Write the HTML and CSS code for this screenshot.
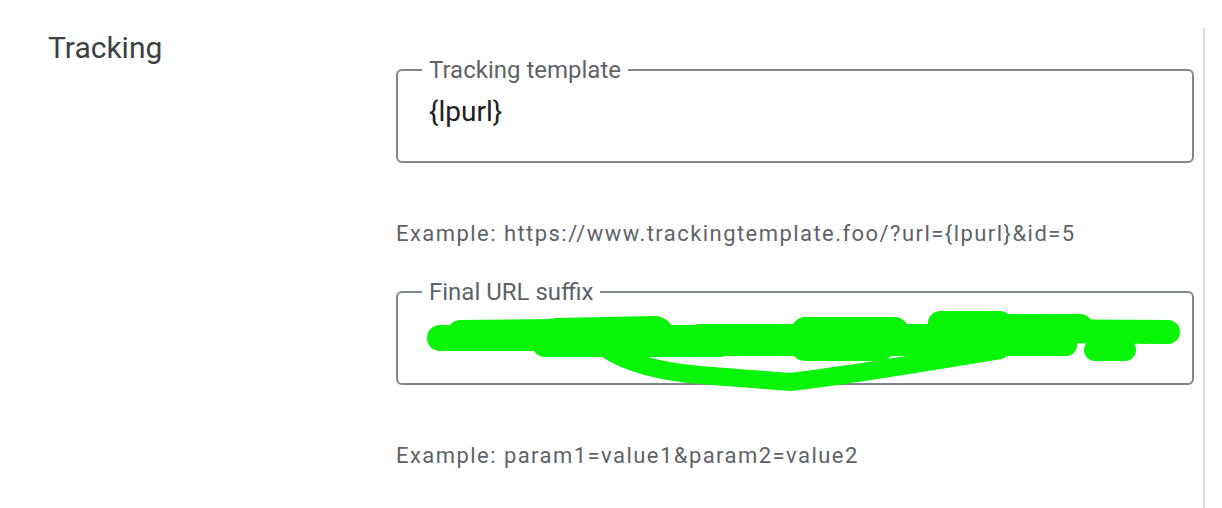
FILE: index.html
```html
<!DOCTYPE html>
<html lang="en">
<head>
<meta charset="utf-8">
<title>Tracking</title>
<link rel="stylesheet" href="styles.css">
</head>
<body>
<div class="page">
  <div class="side">
    <h2 class="title">Tracking</h2>
  </div>
  <div class="main">
    <div class="field">
      <fieldset class="box">
        <legend class="label">Tracking template</legend>
        <div class="row"><span class="value">{lpurl}</span></div>
      </fieldset>
    </div>
    <p class="hint hint-first">Example: https://www.trackingtemplate.foo/?url={lpurl}&amp;id=5</p>
    <div class="field field-second">
      <fieldset class="box">
        <legend class="label">Final URL suffix</legend>
        <div class="row">
          <span class="value"></span>
          <svg class="clear-icon" width="24" height="24" viewBox="0 0 24 24"><circle cx="12" cy="12" r="9" fill="none" stroke="#80868b" stroke-width="2"/></svg>
        </div>
      </fieldset>
      <svg class="redact" width="798" height="120" viewBox="0 0 798 120">
        <g fill="none" stroke="#08f508" stroke-linecap="round" stroke-linejoin="round">
          <path d="M44 58 L304 58" stroke-width="26"/>
          <path d="M64 52 L264 50" stroke-width="24"/>
          <path d="M149 64 L324 64" stroke-width="26"/>
          <path d="M160 50 L260 48" stroke-width="24"/>
          <path d="M304 60 L604 60" stroke-width="32"/>
          <path d="M409 66 L484 66" stroke-width="30"/>
          <path d="M409 50 L499 50" stroke-width="26"/>
          <path d="M544 43 L604 43" stroke-width="24"/>
          <path d="M604 47 L684 47" stroke-width="26"/>
          <path d="M590 65 L670 65" stroke-width="22"/>
          <path d="M604 51 L772 52" stroke-width="24"/>
          <path d="M699 70 L729 70" stroke-width="22"/>
          <path d="M212 70 Q244 90 304 95 L394 102 Q454 95 604 70" stroke-width="18"/>
        </g>
      </svg>
    </div>
    <p class="hint hint-second">Example: param1=value1&amp;param2=value2</p>
  </div>
  <div class="divider"></div>
</div>
</body>
</html>
```

FILE: styles.css
```css
html, body {
  margin: 0;
  padding: 0;
  background: #ffffff;
}

.page {
  display: flex;
  min-height: 508px;
  font-family: Roboto, "Liberation Sans", sans-serif;
}

.side {
  width: 396px;
  box-sizing: border-box;
  padding-left: 48px;
  padding-top: 30px;
  flex-shrink: 0;
}

.title {
  margin: 0;
  font-size: 30px;
  line-height: 36px;
  font-weight: 400;
  color: #3c4043;
}

.main {
  width: 798px;
  flex-shrink: 0;
  padding-top: 58px;
}

.field {
  position: relative;
}

.field-second {
  margin-top: 33px;
}

.box {
  margin: 0;
  min-width: 0;
  border: 2px solid #80868b;
  border-radius: 6px;
  padding: 16px 36px 35px 24px;
}

.label {
  padding: 0 7px;
  font-size: 24px;
  line-height: 24px;
  color: #5f6368;
}

.row {
  display: flex;
  justify-content: space-between;
  align-items: center;
  height: 28px;
}

.value {
  padding-left: 7px;
  font-size: 28px;
  line-height: 28px;
  color: #202124;
}

.redact {
  position: absolute;
  left: 0;
  top: 0;
  pointer-events: none;
}

.hint {
  margin: 0;
  font-size: 22px;
  line-height: 26px;
  letter-spacing: 1.45px;
  color: #5f6368;
}

.hint-first {
  margin-top: 58px;
}

.hint-second {
  margin-top: 58px;
}

.divider {
  margin-left: 9px;
  margin-top: 28px;
  width: 0;
  border-left: 2px solid #dadce0;
  align-self: stretch;
}
```
